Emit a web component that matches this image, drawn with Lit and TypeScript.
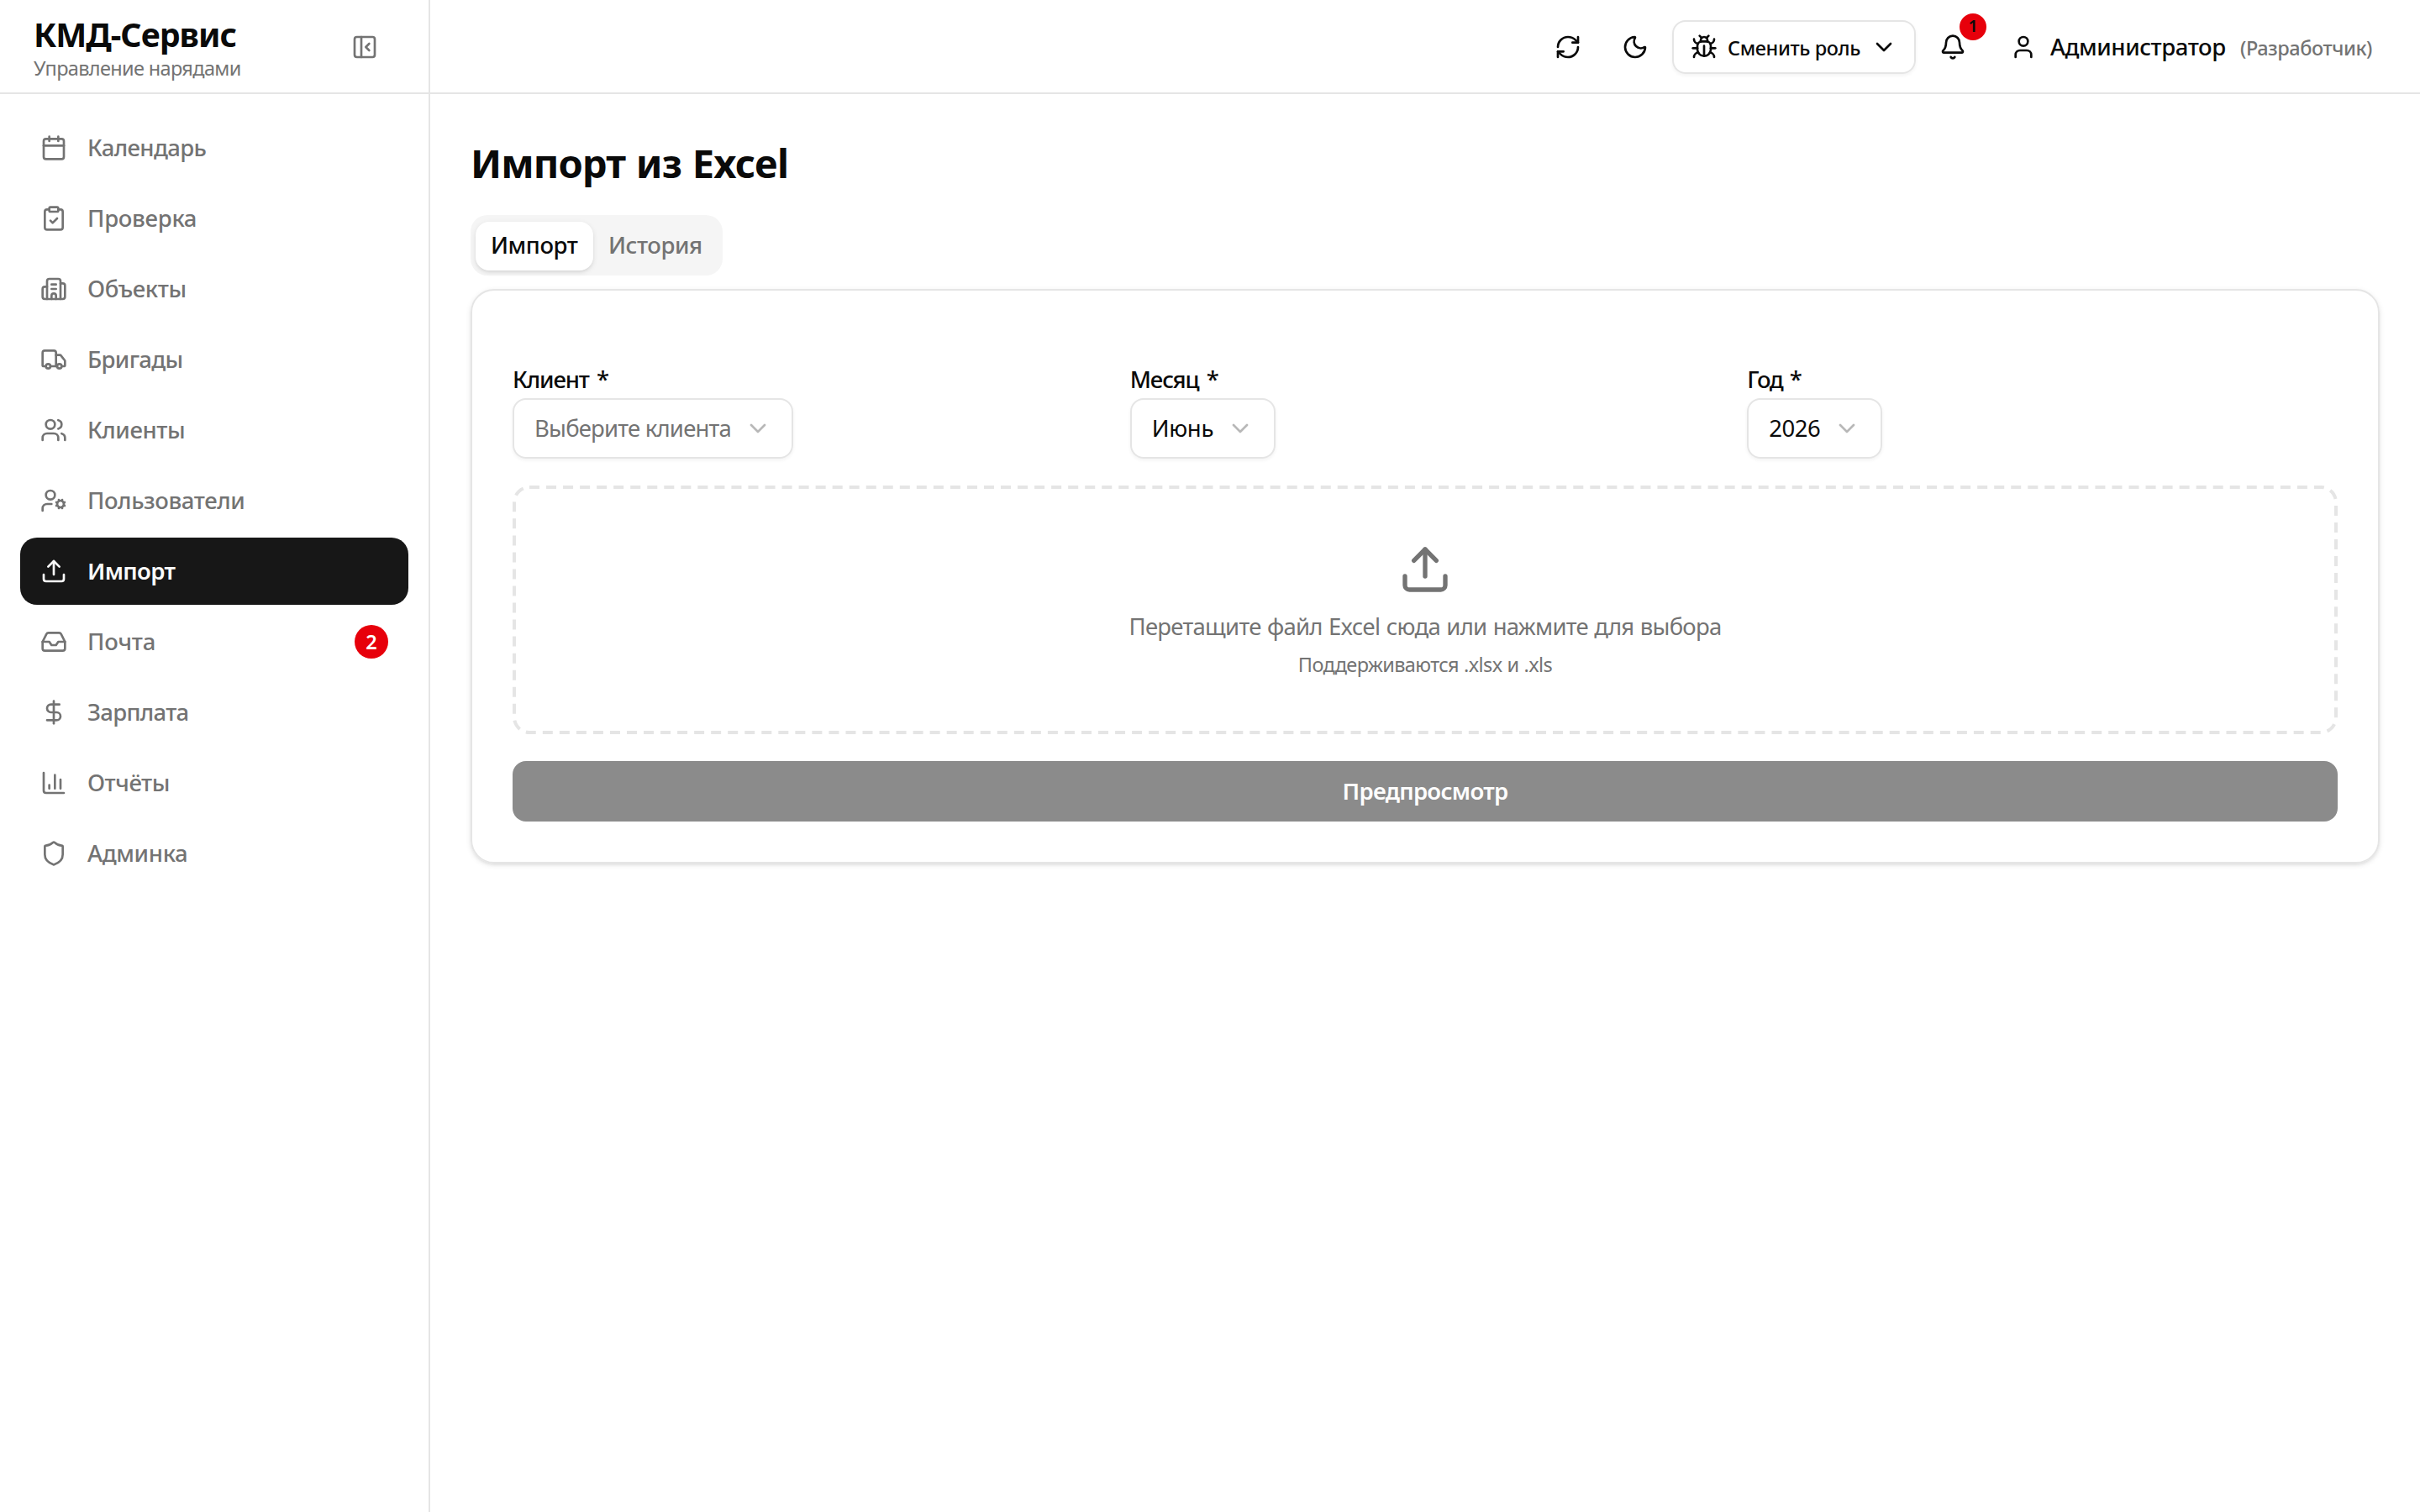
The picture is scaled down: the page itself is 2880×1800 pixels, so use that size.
import { LitElement, html, css, svg, nothing, type SVGTemplateResult } from "lit";
import { customElement, property, state } from "lit/decorators.js";
import { classMap } from "lit/directives/class-map.js";
import { styleMap } from "lit/directives/style-map.js";

const p = (...ds: string[]) => ds.map((d) => svg`<path d=${d}></path>`);
const c = (cx: number, cy: number, r: number) => svg`<circle cx=${cx} cy=${cy} r=${r}></circle>`;

const ICONS: Record<string, SVGTemplateResult> = {
  calendar: svg`${p("M8 2v4", "M16 2v4", "M3 10h18")}<rect width="18" height="18" x="3" y="4" rx="2"></rect>`,
  clipboard: svg`<rect width="8" height="4" x="8" y="2" rx="1"></rect>${p(
    "M16 4h2a2 2 0 0 1 2 2v14a2 2 0 0 1-2 2H6a2 2 0 0 1-2-2V6a2 2 0 0 1 2-2h2",
    "m9 14 2 2 4-4",
  )}`,
  building: svg`${p(
    "M10 12h4",
    "M10 8h4",
    "M14 21v-3a2 2 0 0 0-4 0v3",
    "M6 10H4a2 2 0 0 0-2 2v7a2 2 0 0 0 2 2h16a2 2 0 0 0 2-2V9a2 2 0 0 0-2-2h-2",
    "M6 21V5a2 2 0 0 1 2-2h8a2 2 0 0 1 2 2v16",
  )}`,
  truck: svg`${p(
    "M14 18V6a2 2 0 0 0-2-2H4a2 2 0 0 0-2 2v11a1 1 0 0 0 1 1h2",
    "M15 18H9",
    "M19 18h2a1 1 0 0 0 1-1v-3.65a1 1 0 0 0-.22-.624l-3.48-4.35A1 1 0 0 0 17.52 8H14",
  )}${c(17, 18, 2)}${c(7, 18, 2)}`,
  users: svg`${p(
    "M16 21v-2a4 4 0 0 0-4-4H6a4 4 0 0 0-4 4v2",
    "M16 3.128a4 4 0 0 1 0 7.744",
    "M22 21v-2a4 4 0 0 0-3-3.87",
  )}${c(9, 7, 4)}`,
  userCog: svg`${p(
    "M10 15H6a4 4 0 0 0-4 4v2",
    "m14.305 16.53.923-.382",
    "m15.228 13.852-.923-.383",
    "m16.852 12.228-.383-.923",
    "m16.852 17.772-.383.924",
    "m19.148 12.228.383-.923",
    "m19.53 18.696-.382-.924",
    "m20.772 13.852.924-.383",
    "m20.772 16.148.924.383",
  )}${c(18, 15, 3)}${c(9, 7, 4)}`,
  upload: svg`${p("M12 3v12", "m17 8-5-5-5 5", "M21 15v4a2 2 0 0 1-2 2H5a2 2 0 0 1-2-2v-4")}`,
  inbox: svg`${p(
    "M22 12h-6l-2 3h-4l-2-3H2",
    "M5.45 5.11 2 12v6a2 2 0 0 0 2 2h16a2 2 0 0 0 2-2v-6l-3.45-6.89A2 2 0 0 0 16.76 4H7.24a2 2 0 0 0-1.79 1.11z",
  )}`,
  dollar: svg`${p("M12 2v20", "M17 5H9.5a3.5 3.5 0 0 0 0 7h5a3.5 3.5 0 0 1 0 7H6")}`,
  chart: svg`${p("M3 3v16a2 2 0 0 0 2 2h16", "M18 17V9", "M13 17V5", "M8 17v-3")}`,
  shield: svg`${p(
    "M20 13c0 5-3.5 7.5-7.66 8.95a1 1 0 0 1-.67-.01C7.5 20.5 4 18 4 13V6a1 1 0 0 1 1-1c2 0 4.5-1.2 6.24-2.72a1.17 1.17 0 0 1 1.52 0C14.51 3.81 17 5 19 5a1 1 0 0 1 1 1z",
  )}`,
  panel: svg`<rect width="18" height="18" x="3" y="3" rx="2"></rect>${p("M9 3v18", "m16 15-3-3 3-3")}`,
  refresh: svg`${p(
    "M3 12a9 9 0 0 1 9-9 9.75 9.75 0 0 1 6.74 2.74L21 8",
    "M21 3v5h-5",
    "M21 12a9 9 0 0 1-9 9 9.75 9.75 0 0 1-6.74-2.74L3 16",
    "M8 16H3v5",
  )}`,
  moon: svg`${p(
    "M20.985 12.486a9 9 0 1 1-9.473-9.472c.405-.022.617.46.402.803a6 6 0 0 0 8.268 8.268c.344-.215.825-.004.803.401",
  )}`,
  bug: svg`${p(
    "M12 20v-9",
    "M14 7a4 4 0 0 1 4 4v3a6 6 0 0 1-12 0v-3a4 4 0 0 1 4-4z",
    "M14.12 3.88 16 2",
    "M21 21a4 4 0 0 0-3.81-4",
    "M21 5a4 4 0 0 1-3.55 3.97",
    "M22 13h-4",
    "M3 21a4 4 0 0 1 3.81-4",
    "M3 5a4 4 0 0 0 3.55 3.97",
    "M6 13H2",
    "m8 2 1.88 1.88",
    "M9 7.13V6a3 3 0 1 1 6 0v1.13",
  )}`,
  chevron: svg`${p("m6 9 6 6 6-6")}`,
  bell: svg`${p(
    "M10.268 21a2 2 0 0 0 3.464 0",
    "M3.262 15.326A1 1 0 0 0 4 17h16a1 1 0 0 0 .74-1.673C19.41 13.956 18 12.499 18 8A6 6 0 0 0 6 8c0 4.499-1.411 5.956-2.738 7.326",
  )}`,
  user: svg`${p("M19 21v-2a4 4 0 0 0-4-4H9a4 4 0 0 0-4 4v2")}${c(12, 7, 4)}`,
};

@customElement("ui-icon")
class UiIcon extends LitElement {
  @property() name = "";
  static styles = css`
    :host {
      display: block;
      flex: none;
      width: 32px;
      height: 32px;
    }
    .glyph {
      display: block;
      width: 100%;
      height: 100%;
      fill: none;
      stroke: currentColor;
      stroke-width: 2;
      stroke-linecap: round;
      stroke-linejoin: round;
    }
  `;
  render() {
    return html`<svg class="glyph" viewBox="0 0 24 24">${ICONS[this.name]}</svg>`;
  }
}

interface NavItem {
  icon: string;
  label: string;
  tracking: number;
  count?: number;
}

const NAV: NavItem[] = [
  { icon: "calendar", label: "Календарь", tracking: -0.65 },
  { icon: "clipboard", label: "Проверка", tracking: -0.27 },
  { icon: "building", label: "Объекты", tracking: -0.4 },
  { icon: "truck", label: "Бригады", tracking: -0.65 },
  { icon: "users", label: "Клиенты", tracking: -0.42 },
  { icon: "userCog", label: "Пользователи", tracking: -0.42 },
  { icon: "upload", label: "Импорт", tracking: -0.68 },
  { icon: "inbox", label: "Почта", tracking: -0.15, count: 2 },
  { icon: "dollar", label: "Зарплата", tracking: -0.7 },
  { icon: "chart", label: "Отчёты", tracking: -0.45 },
  { icon: "shield", label: "Админка", tracking: -0.34 },
];

const FIELDS = [
  { label: "Клиент *", value: "Выберите клиента", width: 334, empty: true, labelTracking: -1.1, tracking: -0.8 },
  { label: "Месяц *", value: "Июнь", width: 173, empty: false, labelTracking: -1.1, tracking: -0.3 },
  { label: "Год *", value: "2026", width: 161, empty: false, labelTracking: -1.6, tracking: -0.5 },
];

@customElement("app-root")
class AppRoot extends LitElement {
  @state() active = "Импорт";

  static styles = css`
    :host {
      display: grid;
      grid-template-columns: 512px 1fr;
      width: 100%;
      height: 100vh;
      background: #fff;
      color: #0a0a0a;
      font: 400 27.5px/40px "Noto Sans", "Open Sans", sans-serif;
      white-space: nowrap;
    }
    * {
      box-sizing: border-box;
    }
    .sidebar {
      border-right: 2px solid #e5e5e5;
      color: #737373;
    }
    .brand {
      display: flex;
      align-items: center;
      justify-content: space-between;
      height: 112px;
      padding: 2px 60px 0 40px;
      border-bottom: 2px solid #e5e5e5;
    }
    .brand-text {
      padding-top: 1px;
    }
    .brand-name {
      font-size: 39.3px;
      font-weight: 700;
      line-height: 50px;
      letter-spacing: -1px;
      color: #0a0a0a;
    }
    .brand-sub {
      font-size: 23.5px;
      line-height: 31px;
      letter-spacing: -0.65px;
    }
    .nav {
      display: flex;
      flex-direction: column;
      gap: 4px;
      padding: 24px;
    }
    .nav-item {
      display: flex;
      align-items: center;
      gap: 24px;
      height: 80px;
      padding: 0 24px;
      border-radius: 20px;
      font-weight: 500;
    }
    .nav-item.active {
      background: #171717;
      color: #fafafa;
      font-weight: 600;
    }
    .count {
      width: 40px;
      height: 40px;
      margin-left: auto;
      border-radius: 50%;
      background: #e7000b;
      color: #fff;
      font-size: 23.5px;
      font-weight: 600;
      text-align: center;
    }
    .header {
      display: flex;
      align-items: center;
      justify-content: flex-end;
      gap: 12px;
      height: 112px;
      padding: 2px 56px 0 0;
      border-bottom: 2px solid #e5e5e5;
      font-weight: 500;
    }
    .icon-btn {
      position: relative;
      display: grid;
      place-items: center;
      width: 64px;
      height: 64px;
    }
    .refresh {
      margin-right: 4px;
    }
    .notice {
      position: absolute;
      top: -8px;
      right: -8px;
      width: 32px;
      height: 32px;
      border-radius: 50%;
      background: #e7000b;
      font-size: 19.6px;
      line-height: 30px;
      text-align: center;
      font-weight: 600;
    }
    .role {
      display: flex;
      align-items: center;
      gap: 12px;
      height: 64px;
      padding: 0 20px;
      border: 2px solid #e5e5e5;
      border-radius: 16px;
      box-shadow: 0 2px 4px rgba(0, 0, 0, 0.05);
      font-size: 23.5px;
      line-height: 32px;
    }
    .role-text {
      width: 158px;
      padding-top: 1px;
      letter-spacing: -0.4px;
    }
    .account {
      display: flex;
      align-items: center;
      gap: 16px;
      margin-left: 24px;
    }
    .account-name {
      width: 210px;
      letter-spacing: -0.44px;
    }
    .account-role {
      width: 158px;
      padding-top: 1px;
      color: #737373;
      font-size: 23.5px;
      font-weight: 500;
      line-height: 32px;
      letter-spacing: -0.45px;
    }
    .page {
      display: flex;
      flex-direction: column;
      align-items: stretch;
      padding: 48px;
    }
    .title {
      margin: 0 0 32px;
      padding-top: 2px;
      height: 64px;
      font-size: 47.1px;
      font-weight: 700;
      line-height: 64px;
      letter-spacing: -0.95px;
      word-spacing: 1.5px;
    }
    .tabs {
      display: flex;
      align-self: flex-start;
      height: 72px;
      margin-bottom: 16px;
      padding: 8px 6px 6px;
      border-radius: 20px;
      background: #f5f5f5;
      font-weight: 500;
      line-height: 56px;
    }
    .tab {
      padding: 0 18px;
      border-radius: 16px;
      color: #737373;
      letter-spacing: -0.45px;
    }
    .tab-import {
      width: 140px;
    }
    .tab-history {
      width: 148px;
    }
    .tab.active {
      background: #fff;
      color: #0a0a0a;
      box-shadow:
        0 2px 6px rgba(0, 0, 0, 0.1),
        0 2px 4px -2px rgba(0, 0, 0, 0.1);
    }
    .tabs-body {
      display: flex;
      flex-direction: column;
      gap: 32px;
      padding: 86px 48px 48px;
      border: 2px solid #e5e5e5;
      border-radius: 28px;
      box-shadow:
        0 2px 6px rgba(0, 0, 0, 0.1),
        0 2px 4px -2px rgba(0, 0, 0, 0.1);
    }
    .fields {
      display: grid;
      grid-template-columns: repeat(3, 1fr);
      gap: 32px;
    }
    .label {
      margin-bottom: 2px;
      font-weight: 500;
      word-spacing: 3px;
    }
    .select {
      display: flex;
      align-items: center;
      justify-content: space-between;
      height: 72px;
      padding: 0 24px;
      border: 2px solid #e5e5e5;
      border-radius: 16px;
      box-shadow: 0 2px 4px rgba(0, 0, 0, 0.05);
    }
    .select.empty {
      color: #737373;
    }
    .chevron {
      color: #737373;
      opacity: 0.5;
    }
    .drop {
      position: relative;
      display: flex;
      flex-direction: column;
      align-items: center;
      height: 296px;
      padding: 68px 0;
      color: #737373;
    }
    .drop-outline {
      position: absolute;
      inset: 0;
      width: 100%;
      height: 100%;
    }
    .drop-dashes {
      x: 2px;
      y: 2px;
      width: calc(100% - 4px);
      height: calc(100% - 4px);
      rx: 18px;
      fill: none;
      stroke: #e5e5e5;
      stroke-width: 4px;
      stroke-dasharray: 12 8.037;
    }
    .drop-icon {
      width: 64px;
      height: 64px;
      margin-bottom: 16px;
    }
    .drop-text {
      letter-spacing: -0.72px;
      word-spacing: 0.8px;
    }
    .drop-hint {
      margin-top: 9px;
      font-size: 23.5px;
      line-height: 32px;
      letter-spacing: -0.6px;
      word-spacing: 0.5px;
    }
    .submit {
      height: 72px;
      border-radius: 16px;
      background: #8b8b8b;
      color: #fdfdfd;
      font-weight: 600;
      line-height: 72px;
      letter-spacing: -0.72px;
      text-align: center;
    }
  `;

  render() {
    return html`
      <aside class="sidebar">
        <div class="brand">
          <div class="brand-text">
            <div class="brand-name">КМД-Сервис</div>
            <div class="brand-sub">Управление нарядами</div>
          </div>
          <ui-icon name="panel"></ui-icon>
        </div>
        <nav class="nav">
          ${NAV.map(
            (n) => html`
              <a
                class=${classMap({ "nav-item": true, active: n.label === this.active })}
                @click=${() => (this.active = n.label)}
              >
                <ui-icon name=${n.icon}></ui-icon>
                <span style=${styleMap({ letterSpacing: `${n.tracking}px` })}>${n.label}</span>
                ${n.count ? html`<span class="count">${n.count}</span>` : nothing}
              </a>
            `,
          )}
        </nav>
      </aside>
      <div>
        <header class="header">
          <div class="icon-btn refresh"><ui-icon name="refresh"></ui-icon></div>
          <div class="icon-btn"><ui-icon name="moon"></ui-icon></div>
          <div class="role">
            <ui-icon name="bug"></ui-icon>
            <span class="role-text">Сменить роль</span>
            <ui-icon name="chevron"></ui-icon>
          </div>
          <div class="icon-btn">
            <ui-icon name="bell"></ui-icon>
            <span class="notice">1</span>
          </div>
          <div class="account">
            <ui-icon name="user"></ui-icon>
            <span class="account-name">Администратор</span>
            <span class="account-role">(Разработчик)</span>
          </div>
        </header>
        <main class="page">
          <h1 class="title">Импорт из Excel</h1>
          <div class="tabs">
            <div class="tab tab-import active">Импорт</div>
            <div class="tab tab-history">История</div>
          </div>
          <section class="tabs-body">
            <div class="fields">
              ${FIELDS.map(
                (f) => html`
                  <div>
                    <div class="label" style=${styleMap({ letterSpacing: `${f.labelTracking}px` })}>${f.label}</div>
                    <div
                      class=${classMap({ select: true, empty: f.empty })}
                      style=${styleMap({ width: `${f.width}px` })}
                    >
                      <span style=${styleMap({ letterSpacing: `${f.tracking}px` })}>${f.value}</span>
                      <ui-icon class="chevron" name="chevron"></ui-icon>
                    </div>
                  </div>
                `,
              )}
            </div>
            <div class="drop">
              <svg class="drop-outline"><rect class="drop-dashes"></rect></svg>
              <ui-icon class="drop-icon" name="upload"></ui-icon>
              <div class="drop-text">Перетащите файл Excel сюда или нажмите для выбора</div>
              <div class="drop-hint">Поддерживаются .xlsx и .xls</div>
            </div>
            <div class="submit">Предпросмотр</div>
          </section>
        </main>
      </div>
    `;
  }
}
